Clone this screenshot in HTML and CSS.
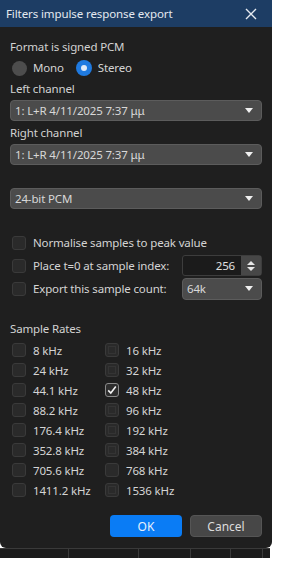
FILE: index.html
```html
<!DOCTYPE html>
<html>
<head>
<meta charset="utf-8">
<link rel="stylesheet" href="styles.css">
</head>
<body>
<div class="dialog">
  <div class="titlebar">
    <span class="title">Filters impulse response export</span>
    <svg class="close" width="12" height="12" viewBox="0 0 12 12"><path d="M1 1L11 11M11 1L1 11" stroke="#e6ebf2" stroke-width="1.4" fill="none"/></svg>
  </div>
  <div class="content">
    <div class="label l-format">Format is signed PCM</div>
    <div class="radios">
      <span class="radio"></span><span class="rtext">Mono</span>
      <span class="radio on"></span><span class="rtext">Stereo</span>
    </div>
    <div class="label l-left">Left channel</div>
    <div class="combo"><span>1: L+R 4/11/2025 7:37 μμ</span><i class="arrow"></i></div>
    <div class="label l-right">Right channel</div>
    <div class="combo"><span>1: L+R 4/11/2025 7:37 μμ</span><i class="arrow"></i></div>
    <div class="combo c-bits"><span>24-bit PCM</span><i class="arrow"></i></div>

    <div class="opts">
      <div class="opt"><span class="cb"></span><span class="otext">Normalise samples to peak value</span></div>
      <div class="opt"><span class="cb"></span><span class="otext">Place t=0 at sample index:</span>
        <div class="spin"><span class="sval">256</span><span class="sbtn"><i class="up"></i><i class="down"></i></span></div>
      </div>
      <div class="opt"><span class="cb"></span><span class="otext">Export this sample count:</span>
        <div class="combo small"><span>64k</span><i class="arrow"></i></div>
      </div>
    </div>

    <div class="label l-rates">Sample Rates</div>
    <div class="rates">
      <div class="rate"><span class="cb"></span>8 kHz</div>
      <div class="rate"><span class="cb alt"></span>16 kHz</div>
      <div class="rate"><span class="cb"></span>24 kHz</div>
      <div class="rate"><span class="cb alt"></span>32 kHz</div>
      <div class="rate"><span class="cb"></span>44.1 kHz</div>
      <div class="rate"><span class="cb checked"><svg width="12" height="12" viewBox="0 0 12 12"><path d="M2.2 6.4L4.8 9L9.8 2.6" stroke="#f2f2f2" stroke-width="1.6" fill="none"/></svg></span>48 kHz</div>
      <div class="rate"><span class="cb"></span>88.2 kHz</div>
      <div class="rate"><span class="cb alt"></span>96 kHz</div>
      <div class="rate"><span class="cb"></span>176.4 kHz</div>
      <div class="rate"><span class="cb alt"></span>192 kHz</div>
      <div class="rate"><span class="cb"></span>352.8 kHz</div>
      <div class="rate"><span class="cb alt"></span>384 kHz</div>
      <div class="rate"><span class="cb"></span>705.6 kHz</div>
      <div class="rate"><span class="cb"></span>768 kHz</div>
      <div class="rate"><span class="cb"></span>1411.2 kHz</div>
      <div class="rate"><span class="cb alt"></span>1536 kHz</div>
    </div>

    <div class="buttons">
      <button class="btn ok">OK</button>
      <button class="btn cancel">Cancel</button>
    </div>
  </div>
</div>
<div class="under">
  <i class="vl v1"></i><i class="vl v2"></i><i class="vl v3"></i><i class="vl v4"></i><i class="vl v5"></i>
</div>
</body>
</html>
```
FILE: styles.css
```css
html, body {
  margin: 0;
  padding: 0;
  background: #ffffff;
}
body {
  font-family: "Noto Sans", "Open Sans", sans-serif;
  font-size: 11.5px;
  letter-spacing: -0.15px;
  color: #d4d4d4;
}
.dialog {
  width: 272px;
  height: 548px;
  background: #1f1f1f;
  border-radius: 0 0 6px 6px;
  overflow: hidden;
}
.titlebar {
  height: 27px;
  background: #1d3d64;
  display: flex;
  align-items: center;
  justify-content: space-between;
  padding: 0 15px 0 6px;
}
.title {
  color: #e4e9f0;
  font-size: 11.5px;
  letter-spacing: -0.1px;
}
.content {
  padding: 0 10px;
}
.label {
  height: 18px;
  line-height: 18px;
  color: #d2d2d2;
}
.l-format { margin-top: 11px; }
.radios {
  height: 18px;
  margin-top: 3px;
  display: flex;
  align-items: center;
}
.radio {
  width: 15px;
  height: 15px;
  border-radius: 50%;
  background: #4d4d4d;
  margin: 0 6px 0 2px;
  box-sizing: border-box;
}
.radio.on {
  background: #1f7ae0;
  position: relative;
  width: 16px;
  height: 16px;
  margin-left: 12px;
}
.radio.on::after {
  content: "";
  position: absolute;
  left: 5px;
  top: 5px;
  width: 6px;
  height: 6px;
  border-radius: 50%;
  background: #dfe9f7;
}
.rtext { line-height: 18px; }
.l-left { margin-top: 3px; }
.combo {
  height: 21px;
  margin-top: 2px;
  background: #4b4b4b;
  border: 1px solid #5c5c5c;
  border-radius: 4px;
  box-sizing: border-box;
  width: 252px;
  display: flex;
  align-items: center;
  justify-content: space-between;
  padding: 0 8px 0 4px;
  color: #d8d8d8;
}
.arrow {
  width: 0;
  height: 0;
  border-left: 4.5px solid transparent;
  border-right: 4.5px solid transparent;
  border-top: 5px solid #f0f0f0;
}
.l-right { margin-top: 3px; }
.c-bits { margin-top: 23px; }
.opts {
  margin-top: 22px;
  display: flex;
  flex-direction: column;
}
.opt {
  height: 23px;
  display: flex;
  align-items: center;
}
.cb {
  width: 14px;
  height: 14px;
  box-sizing: border-box;
  border: 1px solid #3a3a3a;
  background: #2a2a2a;
  border-radius: 3px;
  margin: 0 7px 0 2px;
  flex: none;
  display: inline-flex;
  align-items: center;
  justify-content: center;
}
.cb.alt {
  box-shadow: inset 0 0 0 2px #2a2a2a, inset 0 0 0 3px #343434;
}
.cb.checked {
  border-color: #8a8a8a;
  background: #2e2e2e;
}
.otext { flex: 1; }
.spin {
  width: 80px;
  height: 21px;
  box-sizing: border-box;
  border: 1px solid #3d3d3d;
  border-radius: 3px;
  background: #1b1b1b;
  display: flex;
}
.sval {
  flex: 1;
  text-align: right;
  padding-right: 6px;
  line-height: 19px;
  color: #e0e0e0;
}
.sbtn {
  width: 20px;
  background: #474747;
  display: flex;
  flex-direction: column;
  align-items: center;
  justify-content: center;
  gap: 2px;
}
.up, .down {
  width: 0;
  height: 0;
  border-left: 4px solid transparent;
  border-right: 4px solid transparent;
}
.up { border-bottom: 4px solid #e6e6e6; }
.down { border-top: 4px solid #e6e6e6; }
.combo.small {
  width: 80px;
  height: 22px;
  margin-top: 0;
}
.l-rates { margin-top: 20px; }
.rates {
  margin-top: 2px;
  display: grid;
  grid-template-columns: 93px 1fr;
  grid-auto-rows: 20px;
}
.rate {
  display: flex;
  align-items: center;
  color: #d4d4d4;
}
.buttons {
  margin-top: 15px;
  display: flex;
  justify-content: flex-end;
  gap: 8px;
}
.btn {
  width: 72px;
  height: 22px;
  border-radius: 4px;
  font-family: "Noto Sans", "Open Sans", sans-serif;
  font-size: 12px;
  border: 1px solid transparent;
  padding: 0;
}
.ok {
  background: #0a7cf5;
  color: #e6f0fc;
}
.cancel {
  background: #474747;
  border-color: #555555;
  color: #dcdcdc;
}
.under {
  width: 270px;
  height: 10px;
  background: #1b1b1b;
  border-top: 1px solid #3a3a3a;
  box-sizing: border-box;
  position: relative;
}
.vl {
  position: absolute;
  top: 0;
  bottom: 0;
  width: 1px;
  background: #3a3a3a;
}
.v1 { left: 68px; }
.v2 { left: 138px; }
.v3 { left: 190px; }
.v4 { left: 230px; }
.v5 { left: 262px; }
```
